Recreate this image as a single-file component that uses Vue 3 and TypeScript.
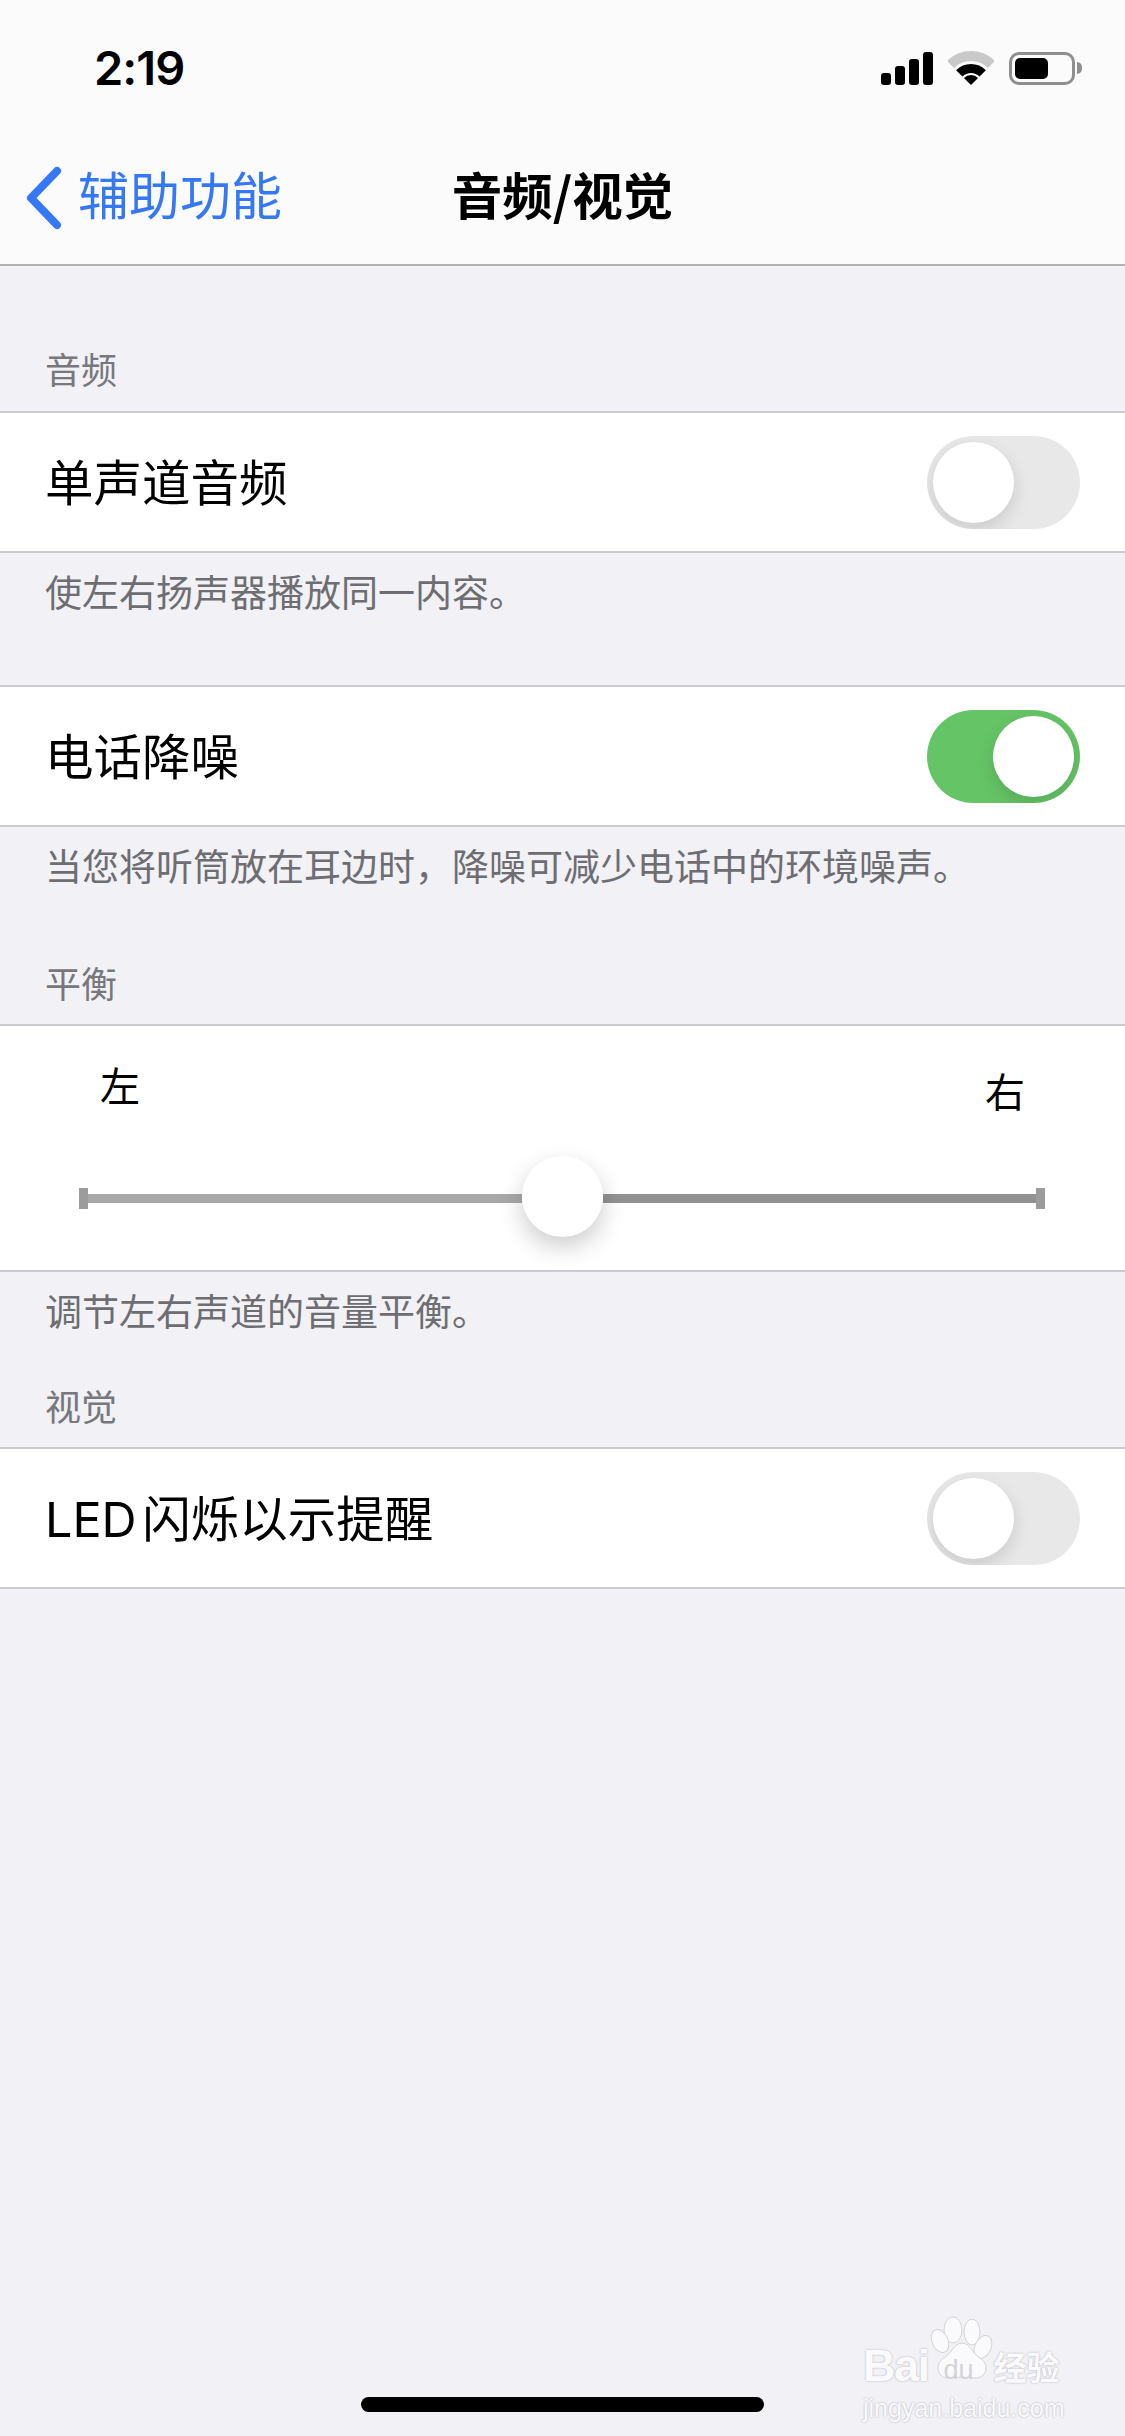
<template>
  <div class="screen">
    <header class="topbar">
      <div class="status">
        <span class="time">2:19</span>
        <div class="status-icons">
          <svg width="52" height="33" viewBox="0 0 52 33">
            <rect x="0" y="21" width="10" height="12" rx="3" />
            <rect x="14" y="14" width="10" height="19" rx="3" />
            <rect x="28" y="7" width="10" height="26" rx="3" />
            <rect x="42" y="0" width="10" height="33" rx="3" />
          </svg>
          <svg width="46" height="34" viewBox="0 0 46 34">
            <path d="M2.5 13.5 A29 29 0 0 1 43.5 13.5" fill="none" stroke="#c9c9c9" stroke-width="10" />
            <path d="M11.3 22.3 A16.5 16.5 0 0 1 34.7 22.3" fill="none" stroke="#000" stroke-width="9" />
            <path d="M23 34 L15.9 26.9 A10 10 0 0 1 30.1 26.9 Z" />
          </svg>
          <div class="battery"><div class="battery-fill"></div></div>
          <div class="battery-nub"></div>
        </div>
      </div>
      <nav class="navrow">
        <div class="back">
          <svg width="36" height="64" viewBox="0 0 36 64">
            <path d="M31 5 L5 32 L31 59" fill="none" stroke="#3478f6" stroke-width="8" stroke-linecap="round" stroke-linejoin="round" />
          </svg>
          <span>辅助功能</span>
        </div>
        <h1 class="title">音频/视觉</h1>
      </nav>
    </header>

    <div class="label first">音频</div>
    <section class="row">
      <span>单声道音频</span>
      <button class="switch" :class="{ on: mono }" @click="mono = !mono"><i></i></button>
    </section>
    <div class="note tall">使左右扬声器播放同一内容。</div>

    <section class="row">
      <span>电话降噪</span>
      <button class="switch" :class="{ on: noise }" @click="noise = !noise"><i></i></button>
    </section>
    <div class="note">{{ noiseNote }}</div>
    <div class="label">平衡</div>

    <section class="balance">
      <div class="ends">
        <span>左</span>
        <span class="right-end">右</span>
      </div>
      <div class="slider">
        <div class="tick"></div>
        <div class="track left"></div>
        <div class="thumb"></div>
        <div class="track right"></div>
        <div class="tick"></div>
      </div>
    </section>
    <div class="note short">调节左右声道的音量平衡。</div>
    <div class="label">视觉</div>

    <section class="row">
      <span class="led">LED 闪烁以示提醒</span>
      <button class="switch" :class="{ on: led }" @click="led = !led"><i></i></button>
    </section>

    <div class="home"></div>

    <div class="watermark">
      <svg class="paw" width="64" height="66" viewBox="0 0 64 66">
        <ellipse cx="23" cy="15" rx="9" ry="13" />
        <ellipse cx="42" cy="17" rx="8" ry="13" />
        <ellipse cx="10" cy="26" rx="8" ry="12" transform="rotate(-25 10 26)" />
        <ellipse cx="53" cy="32" rx="8" ry="12" transform="rotate(25 53 32)" />
        <path d="M32 28 C40 28 42 38 50 43 C60 49 57 64 44 63 C36 62 28 62 20 63 C7 64 4 49 14 43 C22 38 24 28 32 28 Z" />
      </svg>
      <div class="wm-main"><span>Bai</span><span class="wm-du">du</span><span class="wm-cn">经验</span></div>
      <div class="wm-url">jingyan.baidu.com</div>
    </div>
  </div>
</template>

<script setup lang="ts">
import { ref } from "vue";

const mono = ref(false);
const noise = ref(true);
const led = ref(false);

const noiseNote = "当您将听筒放在耳边时\uFF0C降噪可减少电话中的环境噪声。";
</script>

<style>
html,
body {
  margin: 0;
  background: #f1f1f6;
}
</style>

<style scoped>
.screen {
  position: relative;
  width: 1125px;
  height: 2436px;
  overflow: hidden;
  display: flex;
  flex-direction: column;
  background: #f1f1f6;
  font-family: "Noto Sans CJK SC", "Liberation Sans", sans-serif;
  color: #000;
}
.topbar {
  height: 266px;
  box-sizing: border-box;
  background: #fbfbfc;
  border-bottom: 2px solid #b2b2b5;
  flex: none;
}
.status {
  display: flex;
  justify-content: space-between;
  align-items: center;
  height: 88px;
  padding: 48px 43px 0 94px;
  box-sizing: border-box;
}
.time {
  font-family: Inter, "Liberation Sans", sans-serif;
  font-weight: 600;
  font-size: 47px;
  line-height: 56px;
  letter-spacing: -1px;
}
.status-icons {
  display: flex;
  align-items: center;
  gap: 15px;
}
.battery {
  width: 66px;
  height: 33px;
  box-sizing: border-box;
  border: 3px solid #8f8f8f;
  border-radius: 10px;
  padding: 3px;
}
.battery-fill {
  width: 33px;
  height: 21px;
  background: #000;
  border-radius: 5px;
}
.battery-nub {
  width: 5px;
  height: 12px;
  margin-left: -13px;
  background: #8f8f8f;
  border-radius: 0 5px 5px 0;
}
.navrow {
  display: grid;
  grid-template-columns: 1fr auto 1fr;
  align-items: center;
  box-sizing: border-box;
  height: 174px;
  padding-top: 36px;
}
.back {
  display: flex;
  align-items: center;
  gap: 16px;
  padding-left: 26px;
  color: #3478f6;
  font-size: 51px;
  line-height: 64px;
}
.back svg {
  margin-top: 10px;
}
.title {
  margin: 0;
  font-size: 50.5px;
  line-height: 64px;
  font-weight: 700;
}
.label {
  flex: none;
  box-sizing: border-box;
  padding: 0 45px;
  height: 70px;
  font-size: 36px;
  line-height: 56px;
  color: #77777c;
}
.label.first {
  height: 145px;
  padding-top: 74px;
}
.row {
  flex: none;
  box-sizing: border-box;
  height: 142px;
  display: flex;
  align-items: center;
  justify-content: space-between;
  padding: 0 45px;
  background: #fff;
  border-top: 2px solid #cbcad0;
  border-bottom: 2px solid #cbcad0;
  font-family: Inter, "Noto Sans CJK SC", sans-serif;
  font-size: 48.5px;
}
.row span {
  margin-bottom: 5px;
}
.led {
  word-spacing: -8px;
}
.switch {
  position: relative;
  width: 153px;
  height: 93px;
  padding: 0;
  border: 0;
  border-radius: 47px;
  background: #e8e8e8;
  overflow: hidden;
  cursor: pointer;
}
.switch i {
  position: absolute;
  top: 6px;
  left: 6px;
  width: 81px;
  height: 81px;
  border-radius: 50%;
  background: #fff;
  box-shadow: 0 7px 18px rgba(0, 0, 0, 0.13);
}
.switch.on {
  background: #65c466;
}
.switch.on i {
  left: 66px;
}
.note {
  flex: none;
  box-sizing: border-box;
  height: 127px;
  padding: 10px 45px 0;
  font-size: 37px;
  line-height: 56px;
  color: #6d6d72;
}
.note.tall {
  height: 132px;
}
.note.short {
  height: 105px;
}
.balance {
  flex: none;
  box-sizing: border-box;
  height: 248px;
  padding-top: 33px;
  background: #fff;
  border-top: 2px solid #cbcad0;
  border-bottom: 2px solid #cbcad0;
}
.ends {
  display: flex;
  justify-content: space-between;
  padding: 0 100px;
  font-size: 40px;
  line-height: 50px;
}
.right-end {
  margin-top: 6px;
}
.slider {
  display: flex;
  align-items: center;
  margin: 41px 80px 0 79px;
  height: 81px;
}
.tick {
  flex: none;
  width: 9px;
  height: 21px;
  margin-top: 4px;
  background: #9c9c9c;
}
.track {
  flex: 1;
  height: 9px;
  margin-top: 4px;
}
.track.left {
  background: #a8a8a8;
}
.track.right {
  background: #929292;
}
.thumb {
  flex: none;
  width: 81px;
  height: 81px;
  border-radius: 50%;
  background: #fff;
  box-shadow: 0 10px 24px rgba(0, 0, 0, 0.2);
  position: relative;
  z-index: 1;
}
.home {
  margin-top: auto;
  margin-bottom: 24px;
  align-self: center;
  width: 403px;
  height: 15px;
  border-radius: 8px;
  background: #000;
}
.watermark {
  position: absolute;
  left: 863px;
  top: 2315px;
  width: 210px;
  color: #fafafc;
  text-shadow: 0 0 2px #a8a8ae;
  font-family: "Liberation Sans", "Noto Sans CJK SC", sans-serif;
}
.paw {
  position: absolute;
  left: 67px;
  top: 0;
  fill: #fafafc;
  stroke: #d4d4d8;
  stroke-width: 1;
}
.wm-main {
  position: relative;
  padding-top: 24px;
  display: flex;
  align-items: center;
  font-size: 45px;
  line-height: 46px;
  font-weight: 700;
  letter-spacing: -1.5px;
}
.wm-du {
  margin-left: 15px;
  width: 34px;
  padding-top: 8px;
  font-size: 27px;
  font-weight: 400;
  letter-spacing: 0;
  color: #d4d4d8;
  text-shadow: none;
}
.wm-cn {
  font-family: "Noto Sans CJK SC", sans-serif;
  font-size: 33px;
  margin-left: 16px;
  letter-spacing: 0;
  white-space: nowrap;
}
.wm-url {
  position: relative;
  margin-top: -2px;
  font-size: 25px;
  line-height: 34px;
  white-space: nowrap;
}
</style>
